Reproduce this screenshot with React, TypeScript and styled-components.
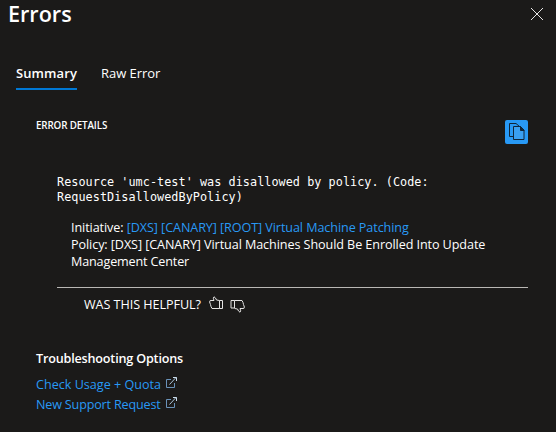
import React from "react";
import styled, { createGlobalStyle } from "styled-components";

const GlobalStyle = createGlobalStyle`
  * { box-sizing: border-box; }
  body { margin: 0; background: #1b1a19; overflow: hidden; }
  button { border: 0; padding: 0; margin: 0; background: none; color: inherit; font: inherit; letter-spacing: inherit; cursor: pointer; }
  svg { display: block; flex: none; }
`;

const Panel = styled.main`
  width: 556px;
  height: 432px;
  background: #1b1a19;
  color: #fff;
  font: 400 12.6px/17px "Open Sans", "Noto Sans", sans-serif;
  white-space: nowrap;
`;

const Header = styled.header`
  display: flex;
  justify-content: space-between;
  height: 64px;
  padding: 0 12px 0 8px;
`;

const Title = styled.h1`
  margin: 0;
  font-size: 21.6px;
  line-height: 28px;
  font-weight: 600;
`;

const CloseButton = styled.button`
  align-self: flex-start;
  padding-top: 7px;
`;

const Tabs = styled.nav`
  display: flex;
  gap: 24px;
  padding-left: 16px;
`;

const Tab = styled.button<{ $active?: boolean }>`
  height: 26px;
  padding-bottom: 6px;
  border-bottom: 2px solid ${(p) => (p.$active ? "#0078d4" : "transparent")};
  font-size: 13px;
  line-height: 18px;
  font-weight: ${(p) => (p.$active ? 600 : 400)};
  letter-spacing: ${(p) => (p.$active ? "0.1px" : "-0.05px")};
`;

const DetailsHeader = styled.div`
  display: flex;
  justify-content: space-between;
  height: 85px;
  padding: 29px 28px 0 36px;
`;

const DetailsTitle = styled.h2`
  margin: 0;
  font-size: 9.8px;
  line-height: 14px;
  font-weight: 600;
  letter-spacing: -0.13px;
`;

const CopyButton = styled.button`
  width: 23px;
  height: 24px;
  margin-top: 1px;
  border-radius: 2px;
  background: #2899f5;
`;

const Details = styled.section`
  margin: 0 28px 0 57px;
  border-bottom: 1px solid #b9b7b4;
  height: 113px;
`;

const Message = styled.pre`
  margin: 0;
  font: 400 11.8px/15px "DejaVu Sans Mono", monospace;
  letter-spacing: 0.045px;
`;

const PolicyList = styled.div`
  padding: 14px 0 0 14px;
`;

const Line = styled.div<{ $spacing?: number }>`
  letter-spacing: ${(p) => p.$spacing ?? 0}px;
`;

const Link = styled.a`
  color: #2899f5;
`;

const Feedback = styled.div`
  display: flex;
  gap: 8px;
  height: 61px;
  padding: 8px 0 0 84px;
  line-height: 18px;
  letter-spacing: -0.05px;
`;

const VoteButton = styled.button<{ $top?: number }>`
  display: flex;
  align-items: flex-start;
  height: 18px;
  padding-top: ${(p) => p.$top ?? 0}px;
`;

const Votes = styled.div`
  display: flex;
  gap: 6px;
  align-items: flex-start;
`;

const Options = styled.section`
  padding: 0 0 0 36px;
`;

const OptionsTitle = styled.h2`
  margin: 0 0 5px;
  font-size: 12.6px;
  line-height: 20px;
  font-weight: 600;
  letter-spacing: -0.18px;
`;

const OptionLink = styled.a<{ $spacing?: number }>`
  display: flex;
  align-items: center;
  gap: 5px;
  height: 20px;
  color: #2899f5;
  letter-spacing: ${(p) => p.$spacing ?? 0}px;

  svg { margin-bottom: 3px; }
`;

function ExternalIcon() {
  return (
    <svg width="11" height="11" viewBox="0 0 11 11" fill="none">
      <path d="M5 2.5H.5v8h8V6" stroke="#6a92b8" />
      <path d="M3.5 7.5l6.5-7" stroke="#b9d3e8" strokeWidth=".9" />
      <path d="M7 .5h3.5V4" stroke="#c9dcec" />
    </svg>
  );
}

function CopyIcon() {
  return (
    <svg width="23" height="24" viewBox="0 0 23 24" fill="none" stroke="#10263a">
      <path d="M8.5 16.5h-4v-13h6.5l3.5 3" />
      <path d="M8.5 6.5h7l3.5 3.5v9.5H8.5z" fill="#3aa0f3" />
      <path d="M15.5 6.5v4H19z" fill="#10263a" />
    </svg>
  );
}

function ThumbUpIcon() {
  return (
    <svg width="15" height="14" viewBox="0 0 15 14" fill="none" stroke="#e4e3e2">
      <path d="M10.5 4.5L7.5 4 6.5 2 5 .8l-.7 1.4.7 2.3H1.2L.6 6l.9 2.5.5 2 1 2h7.5" />
      <path d="M10.5 4.5h3v8h-3z" />
    </svg>
  );
}

function ThumbDownIcon() {
  return (
    <svg width="15" height="14" viewBox="0 0 15 14" fill="none" stroke="#e4e3e2">
      <path d="M4.5 1.5H12l1 2 .5 2 .9 2.5-.6 1.5H10l.7 2.3-.7 1.4-1.5-1.2-1-2-3-.5" />
      <path d="M1 1.5h3.5v7.5H1z" />
    </svg>
  );
}

export default function App() {
  return (
    <Panel>
      <GlobalStyle />
      <Header>
        <Title>Errors</Title>
        <CloseButton aria-label="Close">
          <svg width="14" height="14" viewBox="0 0 14 14" fill="none" stroke="#e6e5e4">
            <path d="M1 1l12 12M13 1L1 13" />
          </svg>
        </CloseButton>
      </Header>
      <Tabs>
        <Tab $active>Summary</Tab>
        <Tab>Raw Error</Tab>
      </Tabs>
      <DetailsHeader>
        <DetailsTitle>ERROR DETAILS</DetailsTitle>
        <CopyButton aria-label="Copy"><CopyIcon /></CopyButton>
      </DetailsHeader>
      <Details>
        <Message>{"Resource 'umc-test' was disallowed by policy. (Code:\nRequestDisallowedByPolicy)"}</Message>
        <PolicyList>
          <Line $spacing={-0.08}>Initiative: <Link>[DXS] [CANARY] [ROOT] Virtual Machine Patching</Link></Line>
          <Line $spacing={-0.08}>Policy: [DXS] [CANARY] Virtual Machines Should Be Enrolled Into Update</Line>
          <Line $spacing={-0.15}>Management Center</Line>
        </PolicyList>
      </Details>
      <Feedback>
        <span>WAS THIS HELPFUL?</span>
        <Votes>
          <VoteButton aria-label="Yes"><ThumbUpIcon /></VoteButton>
          <VoteButton aria-label="No" $top={3}><ThumbDownIcon /></VoteButton>
        </Votes>
      </Feedback>
      <Options>
        <OptionsTitle>Troubleshooting Options</OptionsTitle>
        <OptionLink>Check Usage + Quota<ExternalIcon /></OptionLink>
        <OptionLink $spacing={-0.18}>New Support Request<ExternalIcon /></OptionLink>
      </Options>
    </Panel>
  );
}
